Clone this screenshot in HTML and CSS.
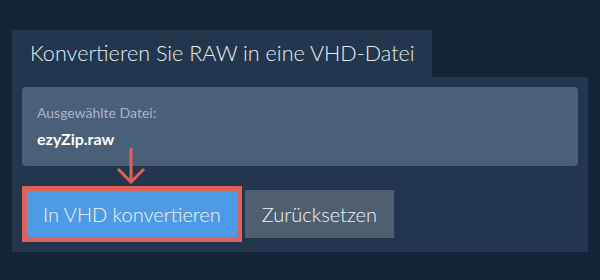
FILE: index.html
```html
<!DOCTYPE html>
<html lang="de">
<head>
  <meta charset="UTF-8" />
  <title>RAW in VHD konvertieren</title>
  <link rel="stylesheet" href="styles.css">
</head>
<body>

  <div class="tab">Konvertieren Sie RAW in eine VHD-Datei</div>

  <div class="panel">
    <div class="file-box">
      <div class="file-label">Ausgewählte Datei:</div>
      <div class="file-name">ezyZip.raw</div>
    </div>

    <div class="actions">
      <!-- Pfeil zeigt auf den Konvertieren-Button -->
      <svg class="arrow" width="30" height="36" viewBox="0 0 30 36">
        <line x1="15" y1="0" x2="15" y2="34" stroke="#e0605a" stroke-width="3"/>
        <polyline points="2,21 15,34 28,21" fill="none" stroke="#e0605a" stroke-width="3"/>
      </svg>
      <button class="btn btn-convert">In VHD konvertieren</button>
      <button class="btn btn-reset">Zurücksetzen</button>
    </div>
  </div>

</body>
</html>
```

FILE: styles.css
```css
body {
  margin: 0;
  padding: 30px 12px 0 12px;
  background: #12243a;
  font-family: Lato, 'Open Sans', sans-serif;
  color: #fff;
}

.tab {
  width: 402px;
  height: 47px;
  padding-left: 18px;
  background: #22364d;
  color: #e8edf2;
  font-size: 21.6px;
  font-weight: 300;
  line-height: 46px;
}

.panel {
  background: #22364d;
  padding: 10px 10px 14px 10px;
}

.file-box {
  height: 79px;
  box-sizing: border-box;
  padding: 17px 15px 0 15px;
  background: #4a6079;
  border-radius: 4px;
}

.file-label {
  font-size: 14px;
  color: #a9b6c5;
  line-height: 18px;
}

.file-name {
  margin-top: 7px;
  font-size: 16px;
  font-weight: 700;
  line-height: 20px;
}

.actions {
  position: relative;
  display: flex;
  gap: 7px;
  margin-top: 24px;
  padding-left: 4px;
}

.arrow {
  position: absolute;
  left: 94px;
  top: -42px;
}

.btn {
  height: 48px;
  padding: 0 17px;
  border: none;
  font-family: Lato, 'Open Sans', sans-serif;
  font-size: 20px;
  font-weight: 300;
  color: #f2f5f8;
  cursor: pointer;
}

.btn-convert {
  background: #4d9be6;
  outline: 5px solid #e0605a;
  outline-offset: -1px;
}

.btn-reset {
  background: #4f5f6f;
}
```
